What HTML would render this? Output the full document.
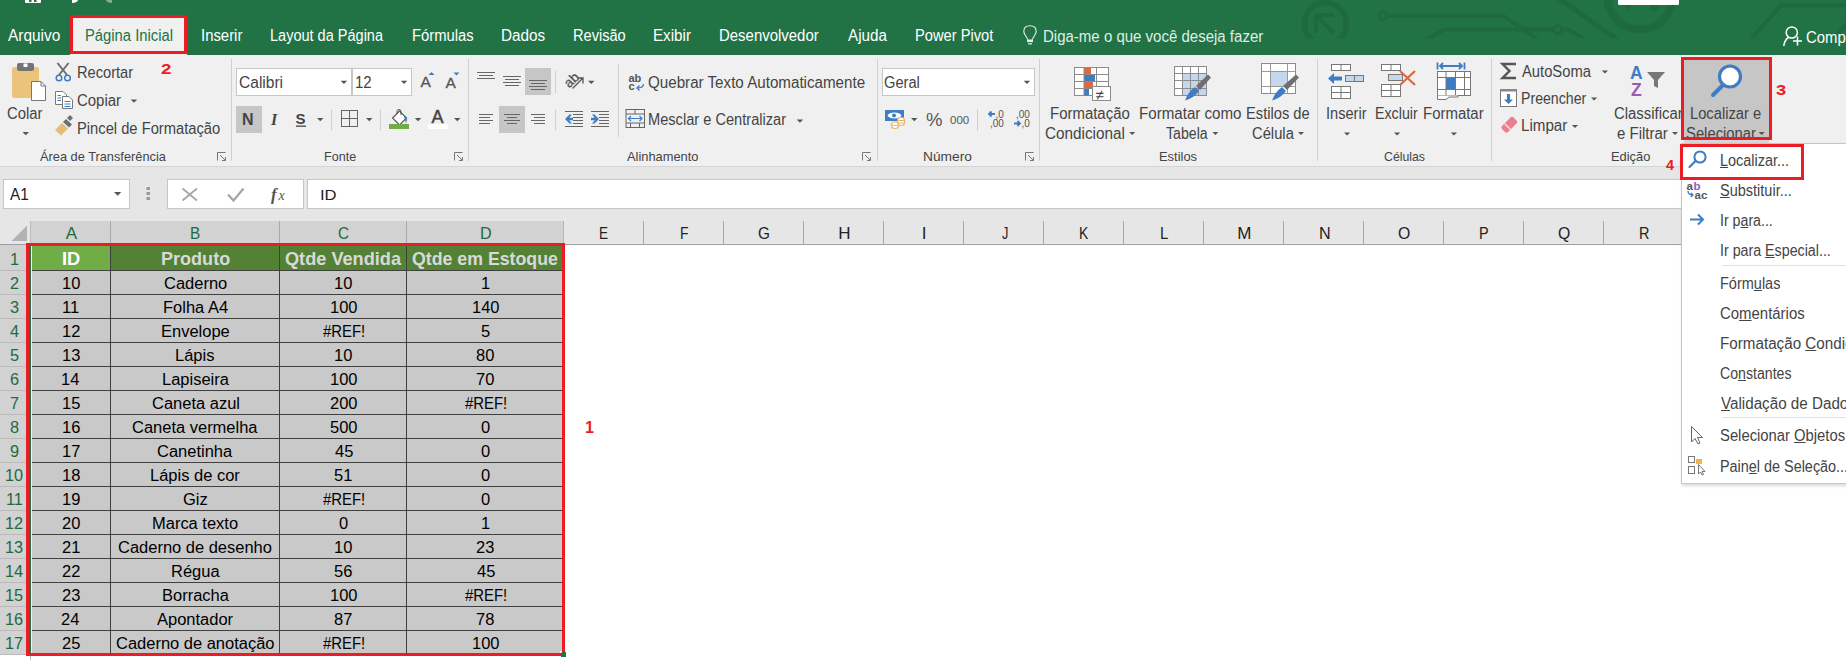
<!DOCTYPE html>
<html><head><meta charset="utf-8">
<style>
html,body{margin:0;padding:0}
body{width:1846px;height:660px;overflow:hidden;position:relative;background:#fff;font-family:"Liberation Sans",sans-serif}
.a{position:absolute}
.t{position:absolute;white-space:pre;line-height:1;transform-origin:0 0;font-family:"Liberation Sans",sans-serif}
.t u{text-decoration:underline;text-underline-offset:1px;text-decoration-thickness:1px}
svg{position:absolute;left:0;top:0}
</style></head><body>
<!-- title bar -->
<div class="a" style="left:0;top:0;width:1846px;height:55px;background:#217346"></div>
<!-- ribbon -->
<div class="a" style="left:0;top:55px;width:1846px;height:111px;background:#f0f0f0"></div>
<div class="a" style="left:0;top:166px;width:1846px;height:1px;background:#d5d5d5"></div>
<!-- formula area -->
<div class="a" style="left:0;top:167px;width:1846px;height:77px;background:#e6e6e6"></div>
<div class="a" style="left:3px;top:179px;width:125px;height:28px;background:#fff;border:1px solid #c6c6c6"></div>
<div class="a" style="left:167px;top:179px;width:135px;height:28px;background:#fff;border:1px solid #c6c6c6"></div>
<div class="a" style="left:307px;top:179px;width:1560px;height:28px;background:#fff;border:1px solid #c6c6c6"></div>
<div class="a" style="left:1684px;top:58px;width:86px;height:81px;background:#c6c6c6"></div>
<div class="a" style="left:1684px;top:139px;width:85px;height:4px;background:#d6d6d6"></div>
<!-- selected tab -->
<div class="a" style="left:70px;top:15px;width:117px;height:40px;background:#f0f0f0"></div>
<!-- sheet -->
<div class="a" style="left:30px;top:221px;width:533px;height:23px;background:#d2d2d2"></div>
<div class="a" style="left:563px;top:243px;width:1283px;height:1px;background:#eaeaea"></div>
<div class="a" style="left:0;top:244px;width:1846px;height:1px;background:#9e9e9e"></div>
<div class="a" style="left:0;top:245px;width:30px;height:409px;background:#d2d2d2"></div>
<div class="a" style="left:30px;top:221px;width:1px;height:439px;background:#bdbdbd"></div>
<svg width="1846" height="660" style="shape-rendering:crispEdges">
 <g fill="#a8a8a8">
  <rect x="110" y="221" width="1" height="23"/><rect x="279" y="221" width="1" height="23"/><rect x="406" y="221" width="1" height="23"/>
  <rect x="563" y="221" width="1" height="23" fill="#b5b5b5"/>
  <rect x="643" y="221" width="1" height="23"/><rect x="723" y="221" width="1" height="23"/><rect x="803" y="221" width="1" height="23"/>
  <rect x="883" y="221" width="1" height="23"/><rect x="963" y="221" width="1" height="23"/><rect x="1043" y="221" width="1" height="23"/>
  <rect x="1123" y="221" width="1" height="23"/><rect x="1203" y="221" width="1" height="23"/><rect x="1283" y="221" width="1" height="23"/>
  <rect x="1363" y="221" width="1" height="23"/><rect x="1443" y="221" width="1" height="23"/><rect x="1523" y="221" width="1" height="23"/>
  <rect x="1603" y="221" width="1" height="23"/>
 </g>
 <g fill="#bababa">
  <rect x="0" y="270" width="30" height="1"/><rect x="0" y="294" width="30" height="1"/><rect x="0" y="318" width="30" height="1"/>
  <rect x="0" y="342" width="30" height="1"/><rect x="0" y="366" width="30" height="1"/><rect x="0" y="390" width="30" height="1"/>
  <rect x="0" y="414" width="30" height="1"/><rect x="0" y="438" width="30" height="1"/><rect x="0" y="462" width="30" height="1"/>
  <rect x="0" y="486" width="30" height="1"/><rect x="0" y="510" width="30" height="1"/><rect x="0" y="534" width="30" height="1"/>
  <rect x="0" y="558" width="30" height="1"/><rect x="0" y="582" width="30" height="1"/><rect x="0" y="606" width="30" height="1"/>
  <rect x="0" y="630" width="30" height="1"/><rect x="0" y="654" width="30" height="1"/>
 </g>
 <polygon points="11.5,241 27,241 27,225.5" fill="#b3b3b3" style="shape-rendering:auto"/>
 <!-- table -->
 <rect x="30" y="244" width="80" height="26" fill="#70ad47"/>
 <rect x="110" y="244" width="453" height="26" fill="#548235"/>
 <rect x="30" y="270" width="533" height="384" fill="#c9c9c9"/>
 <g fill="#404040">
  <rect x="30" y="270" width="533" height="1"/><rect x="30" y="294" width="533" height="1"/><rect x="30" y="318" width="533" height="1"/>
  <rect x="30" y="342" width="533" height="1"/><rect x="30" y="366" width="533" height="1"/><rect x="30" y="390" width="533" height="1"/>
  <rect x="30" y="414" width="533" height="1"/><rect x="30" y="438" width="533" height="1"/><rect x="30" y="462" width="533" height="1"/>
  <rect x="30" y="486" width="533" height="1"/><rect x="30" y="510" width="533" height="1"/><rect x="30" y="534" width="533" height="1"/>
  <rect x="30" y="558" width="533" height="1"/><rect x="30" y="582" width="533" height="1"/><rect x="30" y="606" width="533" height="1"/>
  <rect x="30" y="630" width="533" height="1"/>
  <rect x="110" y="244" width="1" height="410"/><rect x="279" y="244" width="1" height="410"/><rect x="406" y="244" width="1" height="410"/>
 </g>
 <rect x="29" y="244" width="2" height="410" fill="#217346"/>
 <rect x="31" y="246" width="1" height="407" fill="#ffffff"/>
</svg>
<!-- title decorations & QAT -->
<svg width="1846" height="60">
 <defs><clipPath id="tc"><rect x="0" y="0" width="1846" height="38.5"/></clipPath></defs>
 <g clip-path="url(#tc)" stroke="#1e6a3e" fill="none">
  <circle cx="1325.3" cy="23.6" r="21" stroke-width="5.5"/>
  <path d="M1316,33 V15 H1334 M1316.5,15.5 L1334,33" stroke-width="4.2"/>
  <circle cx="1382.8" cy="15.7" r="4" stroke-width="3"/>
  <path d="M1387,15.7 H1503 L1538,40" stroke-width="4"/>
  <path d="M1427,40 L1444,29.6 H1553" stroke-width="4"/>
  <circle cx="1557.7" cy="29.7" r="4" stroke-width="3"/>
  <path d="M1562,29.7 H1569 L1586,40" stroke-width="4"/>
  <path d="M1558,-2 L1618,40" stroke-width="5"/>
  <circle cx="1640" cy="-3" r="32.5" stroke-width="8"/>
  <path d="M1620,-1 L1628.5,11 L1637,-1 Z" fill="#1e6a3e" stroke="none"/>
  <rect x="1650" y="-1" width="9" height="11" fill="#1e6a3e" stroke="none"/>
  <path d="M1750,40 L1781,5.3 H1850" stroke-width="4"/>
  <path d="M1833,40 L1850,20" stroke-width="4"/>
 </g>
 <rect x="1618" y="-3" width="61" height="8" rx="1.5" fill="#fff"/>
 <!-- QAT -->
 <rect x="25" y="-4" width="16" height="7" rx="1" fill="#fff"/>
 <rect x="29" y="-2" width="2.5" height="4" fill="#217346"/><rect x="34" y="-2" width="2.5" height="4" fill="#217346"/>
 <path d="M72,3 Q79,3 78.5,-3 L75,-3 Q75,0 72,0 Z" fill="#fff"/>
 <path d="M112,3 Q105,3 105.5,-3 L109,-3 Q109,0 112,0 Z" fill="#7fae92"/>
 <!-- bulb -->
 <path d="M1027.8,39.5 L1025.5,35.5 Q1023.8,33 1023.8,31.5 Q1023.8,25.8 1030,25.8 Q1036.2,25.8 1036.2,31.5 Q1036.2,33 1034.5,35.5 L1032.2,39.5" fill="none" stroke="#e4efe8" stroke-width="1.1"/>
 <rect x="1027" y="39.5" width="6" height="2.6" fill="#e4efe8"/>
 <rect x="1028" y="43.2" width="4" height="1.2" fill="#e4efe8"/>
 <!-- person -->
 <g stroke="#fff" stroke-width="1.5" fill="none">
  <circle cx="1791.8" cy="32.5" r="5.6"/>
  <path d="M1783.8,46 Q1784.5,40 1788.5,37.5"/>
  <path d="M1793,41 H1802 M1797.5,36.5 V45.5"/>
 </g>
</svg>
<!-- ribbon icons -->
<svg width="1846" height="170">
 <!-- font boxes -->
 <rect x="236.5" y="68.5" width="115" height="27" fill="#fff" stroke="#c6c6c6"/>
 <rect x="352.5" y="68.5" width="59" height="27" fill="#fff" stroke="#c6c6c6"/>
 <rect x="882.5" y="68.5" width="152" height="27" fill="#fff" stroke="#c6c6c6"/>
 <!-- paste -->
 <rect x="12" y="67" width="27" height="31" rx="2" fill="#eac47a"/>
 <rect x="17" y="63" width="17" height="8" rx="2" fill="#737373"/>
 <rect x="23.5" y="63.5" width="4" height="3.5" fill="#fff"/>
 <path d="M31.5,81.5 H41 L45.5,86 V100.5 H31.5 Z" fill="#fff" stroke="#777" stroke-width="1"/>
 <path d="M41,81.5 V86 H45.5" fill="none" stroke="#777" stroke-width="1"/>
 <!-- scissors -->
 <g stroke="#6e6e6e" stroke-width="2" fill="none">
  <path d="M57.5,63 L67,75 M68.5,63 L59,75"/>
 </g>
 <g stroke="#3e7cc3" stroke-width="1.5" fill="none">
  <circle cx="59" cy="78" r="2.8"/><circle cx="67.5" cy="78" r="2.8"/>
 </g>
 <!-- copy -->
 <g fill="#fff" stroke="#777" stroke-width="1">
  <path d="M55.5,91.5 H63 L66.5,95 V104.5 H55.5 Z"/>
  <path d="M62.5,96.5 H69 L72.5,100 V108.5 H62.5 Z"/>
 </g>
 <g stroke="#3e7cc3" stroke-width="1"><path d="M64.5,101.5 H70.5 M64.5,104 H70.5 M64.5,106.5 H70.5 M57.5,95.5 H61 M57.5,98 H61 M57.5,100.5 H61"/></g>
 <!-- brush -->
 <path d="M55,130 L62,123 L68,128.5 L61,135.5 Z" fill="#e5bd73"/>
 <path d="M63,122 L66,119 L72,124.5 L69,127.5 Z" fill="#6e6e6e"/>
 <path d="M67,118 L70,115 L73,118 L70,121 Z" fill="#6e6e6e"/>
 <!-- dropdown arrows -->
 <g fill="#555">
  <path d="M22.5,132 h6.5 l-3.25,3.2 z"/>
  <path d="M130.7,99.5 h6.5 l-3.25,3.2 z"/>
  <path d="M340.7,80.8 h6.5 l-3.25,3.2 z"/>
  <path d="M400.8,80.8 h6.5 l-3.25,3.2 z"/>
  <path d="M317,118 h6.5 l-3.25,3.2 z"/>
  <path d="M366,118 h6.5 l-3.25,3.2 z"/>
  <path d="M414.8,118 h6.5 l-3.25,3.2 z"/>
  <path d="M454,118 h6.5 l-3.25,3.2 z"/>
  <path d="M588,80.8 h6.5 l-3.25,3.2 z"/>
  <path d="M796.7,119.5 h6.5 l-3.25,3.2 z"/>
  <path d="M1023.7,80.8 h6.5 l-3.25,3.2 z"/>
  <path d="M911,118 h6.5 l-3.25,3.2 z"/>
  <path d="M1129.2,132 h6 l-3,3 z"/>
  <path d="M1212.4,132 h6 l-3,3 z"/>
  <path d="M1298,132 h6 l-3,3 z"/>
  <path d="M1344,132.5 h6.2 l-3.1,3 z"/>
  <path d="M1394,132.5 h6.2 l-3.1,3 z"/>
  <path d="M1450.8,132.5 h6.2 l-3.1,3 z"/>
  <path d="M1601.8,70.5 h6.2 l-3.1,3 z"/>
  <path d="M1591,97.5 h6.2 l-3.1,3 z"/>
  <path d="M1571.9,125 h6.2 l-3.1,3 z"/>
  <path d="M1672,132 h6 l-3,3 z"/>
  <path d="M1758.6,132 h6.2 l-3.1,3 z"/>
 </g>
 <!-- separators -->
 <g fill="#d0d0d0">
  <rect x="231" y="59" width="1" height="102"/>
  <rect x="468" y="59" width="1" height="102"/>
  <rect x="877" y="59" width="1" height="102"/>
  <rect x="1039" y="59" width="1" height="102"/>
  <rect x="1317" y="59" width="1" height="102"/>
  <rect x="1491" y="59" width="1" height="102"/>
  <rect x="618" y="64" width="1" height="73"/>
  <rect x="331" y="109" width="1" height="22"/>
  <rect x="380" y="109" width="1" height="22"/>
  <rect x="555" y="71" width="1" height="22"/>
  <rect x="555" y="109" width="1" height="22"/>
  <rect x="977" y="109" width="1" height="22"/>
 </g>
 <!-- dialog launchers -->
 <g stroke="#777" stroke-width="1" fill="none">
  <path d="M217.5,160.5 V152.5 H225.5"/><path d="M220,155 L225.5,160.5 M222,160.5 H225.5 V157"/>
  <path d="M454.5,160.5 V152.5 H462.5"/><path d="M457,155 L462.5,160.5 M459,160.5 H462.5 V157"/>
  <path d="M862.5,160.5 V152.5 H870.5"/><path d="M865,155 L870.5,160.5 M867,160.5 H870.5 V157"/>
  <path d="M1025.5,160.5 V152.5 H1033.5"/><path d="M1028,155 L1033.5,160.5 M1030,160.5 H1033.5 V157"/>
 </g>
 <!-- grow/shrink font -->
 <text x="420.5" y="87" font-family="Liberation Sans" font-size="15.5" fill="#555" stroke="#555" stroke-width="0.3">A</text>
 <path d="M428.5,75 l3,-3 l3,3 z" fill="#3e7cc3"/>
 <text x="445.5" y="87.5" font-family="Liberation Sans" font-size="15.5" fill="#555" stroke="#555" stroke-width="0.3">A</text>
 <path d="M453.5,72.5 h6 l-3,3 z" fill="#3e7cc3"/>
 <!-- B I U -->
 <rect x="236" y="106" width="26" height="27" fill="#c6c6c6"/>
 <text x="242" y="125" font-family="Liberation Sans" font-weight="bold" font-size="16" fill="#444">N</text>
 <text x="271" y="125" font-family="Liberation Serif" font-style="italic" font-weight="bold" font-size="16" fill="#444">I</text>
 <text x="295.5" y="124" font-family="Liberation Sans" font-weight="bold" font-size="15" fill="#444">S</text>
 <rect x="296" y="125.5" width="10" height="1.3" fill="#444"/>
 <!-- borders -->
 <g fill="none" stroke="#666" stroke-width="1"><rect x="341.5" y="110.5" width="16" height="16"/><path d="M349.5,110.5 V126.5 M341.5,118.5 H357.5"/></g>
 <!-- fill color -->
 <path d="M392.5,118 L399.5,111 L406.5,118 L399.5,125 Z" fill="#fff" stroke="#555" stroke-width="1.1"/>
 <path d="M397,114 V111.5 Q397,109.5 399,109.5 Q401,109.5 401,111.5 V115" fill="none" stroke="#555" stroke-width="1"/>
 <path d="M403.5,115 Q409,116 406,123.5 Q405,119 403.5,115 Z" fill="#3e7cc3"/>
 <rect x="389" y="124" width="20" height="5" fill="#70ad47"/>
 <!-- font color -->
 <text x="431.5" y="123" font-family="Liberation Sans" font-size="18" fill="#444" stroke="#444" stroke-width="0.5">A</text>
 <rect x="428" y="124.5" width="20" height="4.5" fill="#fff"/>
 <!-- align icons -->
 <rect x="525" y="68" width="26" height="27" fill="#c6c6c6"/>
 <rect x="499" y="106" width="26" height="27" fill="#c6c6c6"/>
 <g fill="#666"><rect x="477" y="72" width="18" height="1"/><rect x="479" y="75" width="14" height="1"/><rect x="477" y="78" width="18" height="1"/><rect x="503" y="76" width="18" height="1"/><rect x="505" y="79" width="14" height="1"/><rect x="503" y="82" width="18" height="1"/><rect x="505" y="85" width="14" height="1"/><rect x="529" y="80" width="18" height="1"/><rect x="531" y="83" width="14" height="1"/><rect x="529" y="86" width="18" height="1"/><rect x="531" y="89" width="14" height="1"/><rect x="479" y="114" width="14" height="1"/><rect x="479" y="117" width="11" height="1"/><rect x="479" y="120" width="14" height="1"/><rect x="479" y="123" width="11" height="1"/><rect x="504" y="114" width="16" height="1"/><rect x="507" y="117" width="10" height="1"/><rect x="504" y="120" width="16" height="1"/><rect x="507" y="123" width="10" height="1"/><rect x="531" y="114" width="14" height="1"/><rect x="534" y="117" width="11" height="1"/><rect x="531" y="120" width="14" height="1"/><rect x="534" y="123" width="11" height="1"/></g>
 <!-- orientation -->
 <text x="571.5" y="84.5" text-anchor="middle" font-family="Liberation Sans" font-size="13.5" fill="#555" stroke="#555" stroke-width="0.3" transform="rotate(-45 571.5 80)">ab</text>
 <path d="M572.5,88.5 L582.5,78.5 M577.5,78 H583 V83.5" stroke="#555" stroke-width="1.3" fill="none"/>
 <!-- indent -->
 <g fill="#666"><rect x="565" y="111" width="18" height="1"/><rect x="573" y="114" width="10" height="1"/><rect x="573" y="117" width="10" height="1"/><rect x="573" y="120" width="10" height="1"/><rect x="573" y="123" width="10" height="1"/><rect x="565" y="126" width="18" height="1"/><rect x="591" y="111" width="18" height="1"/><rect x="599" y="114" width="10" height="1"/><rect x="599" y="117" width="10" height="1"/><rect x="599" y="120" width="10" height="1"/><rect x="599" y="123" width="10" height="1"/><rect x="591" y="126" width="18" height="1"/></g>
 <path d="M565,119 L569.5,114.5 H572 L569.2,117.8 H573 V120.2 H569.2 L572,123.5 H569.5 Z" fill="#3e7cc3"/>
 <path d="M599,119 L594.5,114.5 H592 L594.8,117.8 H591 V120.2 H594.8 L592,123.5 H594.5 Z" fill="#3e7cc3"/>
 <!-- wrap text -->
 <text x="628.5" y="82" font-family="Liberation Sans" font-weight="bold" font-size="11" fill="#555">ab</text>
 <text x="628.5" y="90" font-family="Liberation Sans" font-weight="bold" font-size="11" fill="#555">c</text>
 <path d="M643.5,84 Q643.5,88 637,88 M639.5,85.5 L637,88 L639.5,90.5" stroke="#3e7cc3" stroke-width="1.3" fill="none"/>
 <!-- merge -->
 <g fill="none" stroke="#666" stroke-width="1"><rect x="626" y="109.5" width="18.5" height="18"/><path d="M626,114 H644.5 M626,123 H644.5 M635,109.5 V114 M630.5,123 V127.5 M639.5,123 V127.5"/></g>
 <path d="M628.5,118.5 H642 M631,116 L628.5,118.5 L631,121 M639.5,116 L642,118.5 L639.5,121" stroke="#3e7cc3" stroke-width="1.2" fill="none"/>
 <!-- currency -->
 <rect x="885" y="110" width="19" height="11" fill="#3e7cc3"/>
 <path d="M887.5,115.5 Q889,112.5 894.5,112.5 Q900,112.5 901.5,115.5 Q900,118.5 894.5,118.5 Q889,118.5 887.5,115.5 Z" fill="#fff"/>
 <circle cx="894" cy="115.5" r="2" fill="#3e7cc3"/>
 <g fill="#fff" stroke="#e5b76a" stroke-width="1.1">
  <rect x="897.5" y="117.5" width="7" height="8" rx="3"/>
  <rect x="891.5" y="122" width="7" height="6.5" rx="3"/>
 </g>
 <path d="M897.5,120.5 H904.5 M897.5,123 H904.5 M891.5,125.3 H898.5" stroke="#e5b76a" stroke-width="1"/>
 <text x="926" y="126" font-family="Liberation Sans" font-size="18.5" fill="#555">%</text>
 <text x="950" y="123.5" font-family="Liberation Sans" font-size="11.5" fill="#555">000</text>
 <!-- decimals -->
 <text x="995.5" y="117.5" font-family="Liberation Sans" font-size="10" fill="#555">,0</text>
 <text x="990" y="127" font-family="Liberation Sans" font-size="10" fill="#555">,00</text>
 <path d="M989,114 H995 M991.5,111.5 L989,114 L991.5,116.5" stroke="#3e7cc3" stroke-width="1.8" fill="none"/>
 <text x="1016" y="117.5" font-family="Liberation Sans" font-size="10" fill="#555">,00</text>
 <text x="1021.5" y="127" font-family="Liberation Sans" font-size="10" fill="#555">,0</text>
 <path d="M1014,123.5 H1020 M1017.5,121 L1020,123.5 L1017.5,126" stroke="#3e7cc3" stroke-width="1.8" fill="none"/>
</svg>
<svg width="1846" height="520">
 <!-- conditional formatting -->
 <g>
  <rect x="1074.5" y="67.5" width="34" height="28" fill="#fff" stroke="#8c8c8c"/>
  <rect x="1084" y="68" width="7" height="6.5" fill="#e0663c"/>
  <rect x="1084" y="75" width="11" height="6.5" fill="#3e7cc3"/>
  <rect x="1084" y="82" width="9" height="6.5" fill="#e0663c"/>
  <rect x="1084" y="89" width="5" height="6.5" fill="#3e7cc3"/>
  <path d="M1084,67.5 V95.5 M1096.5,67.5 V95.5 M1074.5,74.5 H1108.5 M1074.5,81.5 H1108.5 M1074.5,88.5 H1108.5" stroke="#8c8c8c" stroke-width="1" fill="none"/>
  <rect x="1092.5" y="86.5" width="18" height="14" fill="#fff" stroke="#8c8c8c"/>
  <text x="1095.5" y="99.5" font-family="Liberation Sans" font-size="15" fill="#444">≠</text>
 </g>
 <!-- format as table -->
 <g>
  <rect x="1174.5" y="66.5" width="32" height="29" fill="#fff" stroke="#8c8c8c"/>
  <rect x="1182.5" y="73.5" width="24" height="22" fill="#c5d7ec"/>
  <path d="M1182.5,66.5 V95.5 M1190.5,66.5 V95.5 M1198.5,66.5 V95.5 M1174.5,73.5 H1206.5 M1174.5,80.5 H1206.5 M1174.5,88.5 H1206.5" stroke="#8c8c8c" fill="none"/>
  <rect x="1174.5" y="66.5" width="32" height="29" fill="none" stroke="#8c8c8c"/>
  <path d="M1196,86 L1208,74.5 L1211,77.5 L1200,90 Z" fill="#6f6f6f"/>
  <path d="M1185,100.5 Q1188,92 1195,87 L1199,91 Q1194,98 1185,100.5 Z" fill="#3e7cc3"/>
 </g>
 <!-- cell styles -->
 <g>
  <rect x="1261.5" y="63.5" width="34" height="30" fill="#fff" stroke="#8c8c8c"/>
  <rect x="1270" y="71" width="17" height="15" fill="#c5d7ec"/>
  <path d="M1270.5,63.5 V93.5 M1287.5,63.5 V93.5 M1261.5,71.5 H1295.5 M1261.5,86.5 H1295.5" stroke="#9a9a9a" fill="none"/>
  <path d="M1283,86 L1296,74.5 L1299,77.5 L1287,90 Z" fill="#6f6f6f"/>
  <path d="M1272,100.5 Q1275,92 1282,87 L1286,91 Q1281,98 1272,100.5 Z" fill="#3e7cc3"/>
 </g>
 <!-- insert cells -->
 <g fill="#fff" stroke="#777" stroke-width="1">
  <rect x="1331.5" y="64.5" width="19" height="6"/><path d="M1341,64.5 V70.5"/>
  <rect x="1331.5" y="86.5" width="19" height="12"/><path d="M1341,86.5 V98.5 M1331.5,92.5 H1350.5"/>
 </g>
 <rect x="1345.5" y="75.5" width="18" height="6" fill="#c5d7ec" stroke="#777"/><path d="M1354.5,75.5 V81.5" stroke="#777"/>
 <path d="M1328,78.5 L1334,73 V76.5 H1342 V80.5 H1334 V84 Z" fill="#3e7cc3"/>
 <!-- delete cells -->
 <g fill="#fff" stroke="#777" stroke-width="1">
  <rect x="1381.5" y="64.5" width="19" height="6"/><path d="M1391,64.5 V70.5"/>
  <rect x="1381.5" y="84.5" width="19" height="12"/><path d="M1391,84.5 V96.5 M1381.5,90.5 H1400.5"/>
 </g>
 <rect x="1388.5" y="74.5" width="14" height="6" fill="#c5d7ec" stroke="#777"/>
 <path d="M1400,71 L1415,85 M1415,71 L1400,85" stroke="#e0663c" stroke-width="2.2"/>
 <!-- format cells -->
 <path d="M1437.5,62.5 V69.5 M1464.5,62.5 V69.5 M1439.5,66 H1462.5 M1443,63 L1440,66 L1443,69 M1459,63 L1462,66 L1459,69" stroke="#3e7cc3" stroke-width="1.8" fill="none"/>
 <rect x="1437.5" y="71.5" width="33" height="24" fill="#fff" stroke="#777"/>
 <rect x="1446" y="78" width="9" height="11" fill="#3e7cc3"/>
 <path d="M1446,71.5 V95.5 M1455.5,71.5 V95.5 M1464.5,71.5 V95.5 M1437.5,77.5 H1470.5 M1437.5,89.5 H1470.5" stroke="#777" fill="none"/>
 <path d="M1437.5,95.5 V99.5 H1446 L1449,97 H1458 V95.5" fill="#fff" stroke="#777"/>
 <!-- sigma -->
 <path d="M1516,64 H1502.5 L1509.5,71 L1502.5,78 H1516" fill="none" stroke="#555" stroke-width="2.4"/>
 <!-- fill -->
 <rect x="1500.5" y="89.5" width="16" height="17" fill="#fff" stroke="#777"/>
 <rect x="1500" y="89" width="17" height="2.5" fill="#888"/>
 <path d="M1507,94 H1510 V99.5 H1513 L1508.5,104 L1504,99.5 H1507 Z" fill="#3e7cc3"/>
 <!-- eraser -->
 <path d="M1502,126 L1510.5,117.5 Q1512,116 1513.5,117.5 L1516.5,120.5 Q1518,122 1516.5,123.5 L1508,132 Q1506.5,133.5 1505,132 L1502,129 Q1500.5,127.5 1502,126 Z" fill="#e8808f"/>
 <path d="M1504.5,123.5 L1510.5,129.5" stroke="#fbe3e7" stroke-width="1.2"/>
 <!-- sort filter -->
 <text x="1630" y="78.5" font-family="Liberation Sans" font-weight="bold" font-size="17.5" fill="#3e7cc3">A</text>
 <text x="1631" y="96" font-family="Liberation Sans" font-weight="bold" font-size="17.5" fill="#9b59b6">Z</text>
 <path d="M1647,72 H1665 L1658,80 V88 L1654,86 V80 Z" fill="#777"/>
</svg>
<svg width="1846" height="520">
 <!-- magnifier big -->
 <circle cx="1730" cy="76.5" r="10.5" fill="#fff" stroke="#3e7cc3" stroke-width="3.2"/>
 <path d="M1713,95 L1722,86" stroke="#3e7cc3" stroke-width="4" stroke-linecap="round"/>
 <!-- formula bar -->
 <path d="M114,192 h7.3 l-3.65,3.8 z" fill="#555"/>
 <g fill="#9a9a9a"><rect x="146.5" y="187" width="3.5" height="3"/><rect x="146.5" y="192" width="3.5" height="3"/><rect x="146.5" y="197" width="3.5" height="3"/></g>
 <path d="M182.5,188.5 L197,200.5 M197,188.5 L182.5,200.5" stroke="#a6a6a6" stroke-width="1.8"/>
 <path d="M228,194.5 L233.5,200.5 L243.5,188.5" stroke="#a6a6a6" stroke-width="2.2" fill="none"/>
 <text x="271" y="200" font-family="Liberation Serif" font-style="italic" font-weight="bold" font-size="17" fill="#555">f</text>
 <text x="278.5" y="200" font-family="Liberation Serif" font-style="italic" font-size="14" fill="#555">x</text>
</svg>
<!-- dropdown menu -->
<div class="a" style="left:1681px;top:143px;width:200px;height:339px;background:#fff;border:1px solid #c6c6c6;box-shadow:1px 2px 3px rgba(0,0,0,0.15)"></div>
<div class="a" style="left:1722px;top:265px;width:130px;height:1px;background:#e1e1e1"></div>
<div class="a" style="left:1722px;top:417px;width:130px;height:1px;background:#e1e1e1"></div>
<svg width="1846" height="520">
 <circle cx="1700" cy="157" r="5.6" fill="none" stroke="#3e7cc3" stroke-width="2"/>
 <path d="M1689.5,167 L1695.5,161" stroke="#3e7cc3" stroke-width="2.2" stroke-linecap="round"/>
 <text x="1686.5" y="190" font-family="Liberation Sans" font-weight="bold" font-size="11.5" fill="#555">a</text>
 <text x="1693.5" y="190" font-family="Liberation Sans" font-weight="bold" font-size="11.5" fill="#9b59b6">b</text>
 <text x="1694.5" y="198.5" font-family="Liberation Sans" font-weight="bold" font-size="11.5" fill="#505a66">ac</text>
 <path d="M1688,191 Q1688,195 1693,195 M1690.8,193 L1693,195 L1690.8,197" stroke="#3e7cc3" stroke-width="1.3" fill="none"/>
 <path d="M1690,219.5 H1703 M1698,214.5 L1703,219.5 L1698,224.5" stroke="#3e7cc3" stroke-width="2" fill="none"/>
 <path d="M1691.5,426.5 V442 L1695,438.5 L1698,444 L1700,443 L1697.5,437.5 L1702.5,437.5 Z" fill="#fff" stroke="#666" stroke-width="1"/>
 <g fill="none" stroke="#777" stroke-width="1"><rect x="1688.5" y="456.5" width="6" height="6"/><rect x="1688.5" y="466.5" width="6" height="7"/></g>
 <rect x="1696" y="459" width="6" height="5" fill="#f0b44c"/>
 <path d="M1698.5,464.5 V474 L1700.5,472 L1702,475 L1703.5,474.5 L1702,471.5 L1705,471.5 Z" fill="#fff" stroke="#666" stroke-width="0.9"/>
</svg>

<div class="t" style="left:8.00px;top:28.00px;font-size:16px;color:#ffffff;transform:scaleX(0.9630);">Arquivo</div>
<div class="t" style="left:85.08px;top:28.00px;font-size:16px;color:#217346;transform:scaleX(0.9247);">Página Inicial</div>
<div class="t" style="left:201.07px;top:28.00px;font-size:16px;color:#ffffff;transform:scaleX(0.9302);">Inserir</div>
<div class="t" style="left:270.09px;top:28.00px;font-size:16px;color:#ffffff;transform:scaleX(0.9073);">Layout da Página</div>
<div class="t" style="left:412.08px;top:28.00px;font-size:16px;color:#ffffff;transform:scaleX(0.9231);">Fórmulas</div>
<div class="t" style="left:501.04px;top:28.00px;font-size:16px;color:#ffffff;transform:scaleX(0.9556);">Dados</div>
<div class="t" style="left:573.09px;top:28.00px;font-size:16px;color:#ffffff;transform:scaleX(0.9107);">Revisão</div>
<div class="t" style="left:653.05px;top:28.00px;font-size:16px;color:#ffffff;transform:scaleX(0.9487);">Exibir</div>
<div class="t" style="left:719.07px;top:28.00px;font-size:16px;color:#ffffff;transform:scaleX(0.9340);">Desenvolvedor</div>
<div class="t" style="left:848.00px;top:28.00px;font-size:16px;color:#ffffff;transform:scaleX(0.9512);">Ajuda</div>
<div class="t" style="left:915.08px;top:28.00px;font-size:16px;color:#ffffff;transform:scaleX(0.9167);">Power Pivot</div>
<div class="t" style="left:1042.56px;top:29.00px;font-size:16px;color:#dfeee5;transform:scaleX(0.9380);">Diga-me o que você deseja fazer</div>
<div class="t" style="left:1805.67px;top:30.00px;font-size:16px;color:#ffffff;transform:scaleX(0.9300);">Compartilhar</div>
<div class="t" style="left:7.47px;top:106.00px;font-size:16px;color:#444444;transform:scaleX(0.9270);">Colar</div>
<div class="t" style="left:76.98px;top:65.00px;font-size:16px;color:#444444;transform:scaleX(0.9150);">Recortar</div>
<div class="t" style="left:76.67px;top:93.00px;font-size:16px;color:#444444;transform:scaleX(0.9348);">Copiar</div>
<div class="t" style="left:76.68px;top:121.00px;font-size:16px;color:#444444;transform:scaleX(0.9201);">Pincel de Formatação</div>
<div class="t" style="left:40.40px;top:150.00px;font-size:13.2px;color:#444444;transform:scaleX(0.9700);">Área de Transferência</div>
<div class="t" style="left:238.63px;top:75.00px;font-size:16px;color:#444444;transform:scaleX(0.9721);">Calibri</div>
<div class="t" style="left:354.97px;top:75.00px;font-size:16px;color:#444444;transform:scaleX(0.9313);">12</div>
<div class="t" style="left:323.85px;top:150.00px;font-size:13.2px;color:#444444;transform:scaleX(0.9531);">Fonte</div>
<div class="t" style="left:648.45px;top:75.00px;font-size:16px;color:#444444;transform:scaleX(0.9474);">Quebrar Texto Automaticamente</div>
<div class="t" style="left:648.49px;top:112.00px;font-size:16px;color:#444444;transform:scaleX(0.9133);">Mesclar e Centralizar</div>
<div class="t" style="left:627.00px;top:150.00px;font-size:13.2px;color:#444444;transform:scaleX(0.9753);">Alinhamento</div>
<div class="t" style="left:884.38px;top:75.00px;font-size:16px;color:#444444;transform:scaleX(0.9162);">Geral</div>
<div class="t" style="left:923.36px;top:150.00px;font-size:13.2px;color:#444444;transform:scaleX(1.0444);">Número</div>
<div class="t" style="left:1050.37px;top:106.00px;font-size:16px;color:#444444;transform:scaleX(0.9345);">Formatação</div>
<div class="t" style="left:1045.14px;top:126.00px;font-size:16px;color:#444444;transform:scaleX(0.9561);">Condicional</div>
<div class="t" style="left:1139.26px;top:106.00px;font-size:16px;color:#444444;transform:scaleX(0.9449);">Formatar como</div>
<div class="t" style="left:1165.80px;top:126.00px;font-size:16px;color:#444444;transform:scaleX(0.8830);">Tabela</div>
<div class="t" style="left:1246.48px;top:106.00px;font-size:16px;color:#444444;transform:scaleX(0.9176);">Estilos de</div>
<div class="t" style="left:1252.08px;top:126.00px;font-size:16px;color:#444444;transform:scaleX(0.9227);">Célula</div>
<div class="t" style="left:1159.32px;top:150.00px;font-size:13.2px;color:#444444;transform:scaleX(0.9784);">Estilos</div>
<div class="t" style="left:1326.49px;top:106.00px;font-size:16px;color:#444444;transform:scaleX(0.9116);">Inserir</div>
<div class="t" style="left:1375.01px;top:106.00px;font-size:16px;color:#444444;transform:scaleX(0.8894);">Excluir</div>
<div class="t" style="left:1423.27px;top:106.00px;font-size:16px;color:#444444;transform:scaleX(0.9344);">Formatar</div>
<div class="t" style="left:1383.67px;top:150.00px;font-size:13.2px;color:#444444;transform:scaleX(0.9326);">Células</div>
<div class="t" style="left:1522.20px;top:64.00px;font-size:16px;color:#444444;transform:scaleX(0.9227);">AutoSoma</div>
<div class="t" style="left:1521.32px;top:91.00px;font-size:16px;color:#444444;transform:scaleX(0.8836);">Preencher</div>
<div class="t" style="left:1521.05px;top:118.00px;font-size:16px;color:#444444;transform:scaleX(0.9479);">Limpar</div>
<div class="t" style="left:1614.07px;top:106.00px;font-size:16px;color:#444444;transform:scaleX(0.9315);">Classificar</div>
<div class="t" style="left:1617.06px;top:126.00px;font-size:16px;color:#444444;transform:scaleX(0.9377);">e Filtrar</div>
<div class="t" style="left:1611.33px;top:150.00px;font-size:13.2px;color:#444444;transform:scaleX(0.9744);">Edição</div>
<div class="t" style="left:1689.88px;top:106.00px;font-size:16px;color:#444444;transform:scaleX(0.9197);">Localizar e</div>
<div class="t" style="left:1685.57px;top:126.00px;font-size:16px;color:#444444;transform:scaleX(0.9257);">Selecionar</div>
<div class="t" style="left:10.10px;top:187.00px;font-size:16px;color:#222;transform:scaleX(0.9579);">A1</div>
<div class="t" style="left:320.33px;top:187.00px;font-size:15.5px;color:#222;transform:scaleX(1.0714);">ID</div>
<div class="t" style="left:1720.10px;top:153.00px;font-size:16px;color:#444444;transform:scaleX(0.9014);"><u>L</u>ocalizar...</div>
<div class="t" style="left:1720.09px;top:183.00px;font-size:16px;color:#444444;transform:scaleX(0.9065);"><u>S</u>ubstituir...</div>
<div class="t" style="left:1720.11px;top:213.00px;font-size:16px;color:#444444;transform:scaleX(0.8860);">Ir p<u>a</u>ra...</div>
<div class="t" style="left:1720.11px;top:243.00px;font-size:16px;color:#444444;transform:scaleX(0.8902);">Ir para <u>E</u>special...</div>
<div class="t" style="left:1719.99px;top:276.00px;font-size:16px;color:#444444;transform:scaleX(0.9062);">Fórm<u>u</u>las</div>
<div class="t" style="left:1720.07px;top:306.00px;font-size:16px;color:#444444;transform:scaleX(0.9337);">Co<u>m</u>entários</div>
<div class="t" style="left:1720.05px;top:336.00px;font-size:16px;color:#444444;transform:scaleX(0.9500);">Formatação <u>C</u>ondicional</div>
<div class="t" style="left:1720.12px;top:366.00px;font-size:16px;color:#444444;transform:scaleX(0.8838);">Co<u>n</u>stantes</div>
<div class="t" style="left:1721.00px;top:396.00px;font-size:16px;color:#444444;transform:scaleX(0.9500);"><u>V</u>alidação de Dados</div>
<div class="t" style="left:1720.07px;top:428.00px;font-size:16px;color:#444444;transform:scaleX(0.9254);">Selecionar <u>O</u>bjetos</div>
<div class="t" style="left:1720.10px;top:459.00px;font-size:16px;color:#444444;transform:scaleX(0.9000);">Pain<u>e</u>l de Seleção...</div>
<div class="t" style="left:65.70px;top:225.00px;font-size:17px;color:#1d6b3f;">A</div>
<div class="t" style="left:190.30px;top:225.00px;font-size:17px;color:#1d6b3f;transform:scaleX(0.9000);">B</div>
<div class="t" style="left:338.30px;top:225.00px;font-size:17px;color:#1d6b3f;transform:scaleX(0.9000);">C</div>
<div class="t" style="left:479.52px;top:225.00px;font-size:17px;color:#1d6b3f;transform:scaleX(0.9500);">D</div>
<div class="t" style="left:599.40px;top:225.00px;font-size:17px;color:#222;transform:scaleX(0.8000);">E</div>
<div class="t" style="left:679.69px;top:225.00px;font-size:17px;color:#222;transform:scaleX(0.8200);">F</div>
<div class="t" style="left:758.35px;top:225.00px;font-size:17px;color:#222;transform:scaleX(0.9000);">G</div>
<div class="t" style="left:838.20px;top:225.00px;font-size:17px;color:#222;">H</div>
<div class="t" style="left:921.70px;top:225.00px;font-size:17px;color:#222;">I</div>
<div class="t" style="left:1001.58px;top:225.00px;font-size:17px;color:#222;transform:scaleX(0.7500);">J</div>
<div class="t" style="left:1079.28px;top:225.00px;font-size:17px;color:#222;transform:scaleX(0.8200);">K</div>
<div class="t" style="left:1159.80px;top:225.00px;font-size:17px;color:#222;transform:scaleX(0.8800);">L</div>
<div class="t" style="left:1237.20px;top:225.00px;font-size:17px;color:#222;">M</div>
<div class="t" style="left:1318.50px;top:225.00px;font-size:17px;color:#222;transform:scaleX(0.9500);">N</div>
<div class="t" style="left:1398.15px;top:225.00px;font-size:17px;color:#222;transform:scaleX(0.9300);">O</div>
<div class="t" style="left:1479.10px;top:225.00px;font-size:17px;color:#222;transform:scaleX(0.8500);">P</div>
<div class="t" style="left:1558.15px;top:225.00px;font-size:17px;color:#222;transform:scaleX(0.9300);">Q</div>
<div class="t" style="left:1639.10px;top:225.00px;font-size:17px;color:#222;transform:scaleX(0.8500);">R</div>
<div class="t" style="left:9.80px;top:251.00px;font-size:17px;color:#1d6b3f;transform:scaleX(0.9600);">1</div>
<div class="t" style="left:9.80px;top:275.00px;font-size:17px;color:#1d6b3f;transform:scaleX(0.9600);">2</div>
<div class="t" style="left:9.80px;top:299.00px;font-size:17px;color:#1d6b3f;transform:scaleX(0.9600);">3</div>
<div class="t" style="left:10.28px;top:323.00px;font-size:17px;color:#1d6b3f;transform:scaleX(0.9600);">4</div>
<div class="t" style="left:9.80px;top:347.00px;font-size:17px;color:#1d6b3f;transform:scaleX(0.9600);">5</div>
<div class="t" style="left:9.80px;top:371.00px;font-size:17px;color:#1d6b3f;transform:scaleX(0.9600);">6</div>
<div class="t" style="left:9.80px;top:395.00px;font-size:17px;color:#1d6b3f;transform:scaleX(0.9600);">7</div>
<div class="t" style="left:9.80px;top:419.00px;font-size:17px;color:#1d6b3f;transform:scaleX(0.9600);">8</div>
<div class="t" style="left:9.80px;top:443.00px;font-size:17px;color:#1d6b3f;transform:scaleX(0.9600);">9</div>
<div class="t" style="left:5.48px;top:467.00px;font-size:17px;color:#1d6b3f;transform:scaleX(0.9600);">10</div>
<div class="t" style="left:5.96px;top:491.00px;font-size:17px;color:#1d6b3f;transform:scaleX(0.9600);">11</div>
<div class="t" style="left:5.48px;top:515.00px;font-size:17px;color:#1d6b3f;transform:scaleX(0.9600);">12</div>
<div class="t" style="left:5.48px;top:539.00px;font-size:17px;color:#1d6b3f;transform:scaleX(0.9600);">13</div>
<div class="t" style="left:5.00px;top:563.00px;font-size:17px;color:#1d6b3f;transform:scaleX(0.9600);">14</div>
<div class="t" style="left:5.48px;top:587.00px;font-size:17px;color:#1d6b3f;transform:scaleX(0.9600);">15</div>
<div class="t" style="left:5.48px;top:611.00px;font-size:17px;color:#1d6b3f;transform:scaleX(0.9600);">16</div>
<div class="t" style="left:5.48px;top:635.00px;font-size:17px;color:#1d6b3f;transform:scaleX(0.9600);">17</div>
<div class="t" style="left:5.48px;top:659.00px;font-size:17px;color:#222;transform:scaleX(0.9600);">18</div>
<div class="t" style="left:61.71px;top:250.00px;font-size:18.4px;color:#ffffff;font-weight:700;transform:scaleX(0.9941);">ID</div>
<div class="t" style="left:161.02px;top:250.00px;font-size:18.4px;color:#d9d9d9;font-weight:700;transform:scaleX(0.9812);">Produto</div>
<div class="t" style="left:284.51px;top:250.00px;font-size:18.4px;color:#d9d9d9;font-weight:700;transform:scaleX(0.9872);">Qtde Vendida</div>
<div class="t" style="left:412.04px;top:250.00px;font-size:18.4px;color:#d9d9d9;font-weight:700;transform:scaleX(0.9647);">Qtde em Estoque</div>
<div class="t" style="left:61.73px;top:276.00px;font-size:16px;color:#000;transform:scaleX(1.0300);">10</div>
<div class="t" style="left:163.57px;top:276.00px;font-size:16px;color:#000;transform:scaleX(1.0300);">Caderno</div>
<div class="t" style="left:334.23px;top:276.00px;font-size:16px;color:#000;transform:scaleX(1.0300);">10</div>
<div class="t" style="left:480.87px;top:276.00px;font-size:16px;color:#000;transform:scaleX(1.0300);">1</div>
<div class="t" style="left:62.24px;top:300.00px;font-size:16px;color:#000;transform:scaleX(1.0300);">11</div>
<div class="t" style="left:162.54px;top:300.00px;font-size:16px;color:#000;transform:scaleX(1.0300);">Folha A4</div>
<div class="t" style="left:329.60px;top:300.00px;font-size:16px;color:#000;transform:scaleX(1.0300);">100</div>
<div class="t" style="left:471.60px;top:300.00px;font-size:16px;color:#000;transform:scaleX(1.0300);">140</div>
<div class="t" style="left:61.73px;top:324.00px;font-size:16px;color:#000;transform:scaleX(1.0300);">12</div>
<div class="t" style="left:161.00px;top:324.00px;font-size:16px;color:#000;transform:scaleX(1.0300);">Envelope</div>
<div class="t" style="left:323.04px;top:324.00px;font-size:16px;color:#000;transform:scaleX(0.9300);">#REF!</div>
<div class="t" style="left:480.87px;top:324.00px;font-size:16px;color:#000;transform:scaleX(1.0300);">5</div>
<div class="t" style="left:61.73px;top:348.00px;font-size:16px;color:#000;transform:scaleX(1.0300);">13</div>
<div class="t" style="left:175.41px;top:348.00px;font-size:16px;color:#000;transform:scaleX(1.0300);">Lápis</div>
<div class="t" style="left:334.23px;top:348.00px;font-size:16px;color:#000;transform:scaleX(1.0300);">10</div>
<div class="t" style="left:476.23px;top:348.00px;font-size:16px;color:#000;transform:scaleX(1.0300);">80</div>
<div class="t" style="left:61.22px;top:372.00px;font-size:16px;color:#000;transform:scaleX(1.0300);">14</div>
<div class="t" style="left:161.51px;top:372.00px;font-size:16px;color:#000;transform:scaleX(1.0300);">Lapiseira</div>
<div class="t" style="left:329.60px;top:372.00px;font-size:16px;color:#000;transform:scaleX(1.0300);">100</div>
<div class="t" style="left:476.23px;top:372.00px;font-size:16px;color:#000;transform:scaleX(1.0300);">70</div>
<div class="t" style="left:61.73px;top:396.00px;font-size:16px;color:#000;transform:scaleX(1.0300);">15</div>
<div class="t" style="left:151.72px;top:396.00px;font-size:16px;color:#000;transform:scaleX(1.0300);">Caneta azul</div>
<div class="t" style="left:329.60px;top:396.00px;font-size:16px;color:#000;transform:scaleX(1.0300);">200</div>
<div class="t" style="left:465.04px;top:396.00px;font-size:16px;color:#000;transform:scaleX(0.9300);">#REF!</div>
<div class="t" style="left:61.73px;top:420.00px;font-size:16px;color:#000;transform:scaleX(1.0300);">16</div>
<div class="t" style="left:132.16px;top:420.00px;font-size:16px;color:#000;transform:scaleX(1.0300);">Caneta vermelha</div>
<div class="t" style="left:329.60px;top:420.00px;font-size:16px;color:#000;transform:scaleX(1.0300);">500</div>
<div class="t" style="left:480.87px;top:420.00px;font-size:16px;color:#000;transform:scaleX(1.0300);">0</div>
<div class="t" style="left:61.73px;top:444.00px;font-size:16px;color:#000;transform:scaleX(1.0300);">17</div>
<div class="t" style="left:157.39px;top:444.00px;font-size:16px;color:#000;transform:scaleX(1.0300);">Canetinha</div>
<div class="t" style="left:334.75px;top:444.00px;font-size:16px;color:#000;transform:scaleX(1.0300);">45</div>
<div class="t" style="left:480.87px;top:444.00px;font-size:16px;color:#000;transform:scaleX(1.0300);">0</div>
<div class="t" style="left:61.73px;top:468.00px;font-size:16px;color:#000;transform:scaleX(1.0300);">18</div>
<div class="t" style="left:150.18px;top:468.00px;font-size:16px;color:#000;transform:scaleX(1.0300);">Lápis de cor</div>
<div class="t" style="left:334.23px;top:468.00px;font-size:16px;color:#000;transform:scaleX(1.0300);">51</div>
<div class="t" style="left:480.87px;top:468.00px;font-size:16px;color:#000;transform:scaleX(1.0300);">0</div>
<div class="t" style="left:61.73px;top:492.00px;font-size:16px;color:#000;transform:scaleX(1.0300);">19</div>
<div class="t" style="left:183.14px;top:492.00px;font-size:16px;color:#000;transform:scaleX(1.0300);">Giz</div>
<div class="t" style="left:323.04px;top:492.00px;font-size:16px;color:#000;transform:scaleX(0.9300);">#REF!</div>
<div class="t" style="left:480.87px;top:492.00px;font-size:16px;color:#000;transform:scaleX(1.0300);">0</div>
<div class="t" style="left:61.73px;top:516.00px;font-size:16px;color:#000;transform:scaleX(1.0300);">20</div>
<div class="t" style="left:152.24px;top:516.00px;font-size:16px;color:#000;transform:scaleX(1.0300);">Marca texto</div>
<div class="t" style="left:338.87px;top:516.00px;font-size:16px;color:#000;transform:scaleX(1.0300);">0</div>
<div class="t" style="left:480.87px;top:516.00px;font-size:16px;color:#000;transform:scaleX(1.0300);">1</div>
<div class="t" style="left:61.73px;top:540.00px;font-size:16px;color:#000;transform:scaleX(1.0300);">21</div>
<div class="t" style="left:118.25px;top:540.00px;font-size:16px;color:#000;transform:scaleX(1.0300);">Caderno de desenho</div>
<div class="t" style="left:334.23px;top:540.00px;font-size:16px;color:#000;transform:scaleX(1.0300);">10</div>
<div class="t" style="left:476.23px;top:540.00px;font-size:16px;color:#000;transform:scaleX(1.0300);">23</div>
<div class="t" style="left:61.73px;top:564.00px;font-size:16px;color:#000;transform:scaleX(1.0300);">22</div>
<div class="t" style="left:170.78px;top:564.00px;font-size:16px;color:#000;transform:scaleX(1.0300);">Régua</div>
<div class="t" style="left:334.23px;top:564.00px;font-size:16px;color:#000;transform:scaleX(1.0300);">56</div>
<div class="t" style="left:476.75px;top:564.00px;font-size:16px;color:#000;transform:scaleX(1.0300);">45</div>
<div class="t" style="left:61.73px;top:588.00px;font-size:16px;color:#000;transform:scaleX(1.0300);">23</div>
<div class="t" style="left:161.51px;top:588.00px;font-size:16px;color:#000;transform:scaleX(1.0300);">Borracha</div>
<div class="t" style="left:329.60px;top:588.00px;font-size:16px;color:#000;transform:scaleX(1.0300);">100</div>
<div class="t" style="left:465.04px;top:588.00px;font-size:16px;color:#000;transform:scaleX(0.9300);">#REF!</div>
<div class="t" style="left:61.22px;top:612.00px;font-size:16px;color:#000;transform:scaleX(1.0300);">24</div>
<div class="t" style="left:157.39px;top:612.00px;font-size:16px;color:#000;transform:scaleX(1.0300);">Apontador</div>
<div class="t" style="left:334.23px;top:612.00px;font-size:16px;color:#000;transform:scaleX(1.0300);">87</div>
<div class="t" style="left:476.23px;top:612.00px;font-size:16px;color:#000;transform:scaleX(1.0300);">78</div>
<div class="t" style="left:61.73px;top:636.00px;font-size:16px;color:#000;transform:scaleX(1.0300);">25</div>
<div class="t" style="left:116.19px;top:636.00px;font-size:16px;color:#000;transform:scaleX(1.0300);">Caderno de anotação</div>
<div class="t" style="left:323.04px;top:636.00px;font-size:16px;color:#000;transform:scaleX(0.9300);">#REF!</div>
<div class="t" style="left:471.60px;top:636.00px;font-size:16px;color:#000;transform:scaleX(1.0300);">100</div>
<div class="t" style="left:160.79px;top:61.00px;font-size:15.5px;color:#ec1c24;font-weight:700;transform:scaleX(1.2143);">2</div>
<div class="t" style="left:1776.11px;top:82.00px;font-size:15.5px;color:#ec1c24;font-weight:700;transform:scaleX(1.1857);">3</div>
<div class="t" style="left:1666.00px;top:157.00px;font-size:15.5px;color:#ec1c24;font-weight:700;transform:scaleX(0.9333);">4</div>
<div class="t" style="left:584.82px;top:419.00px;font-size:16.5px;color:#ec1c24;font-weight:700;transform:scaleX(0.9750);">1</div>
<!-- red annotation boxes -->
<div class="a" style="left:26px;top:243px;width:539px;height:413px;box-sizing:border-box;border:3px solid #ec1c24"></div>
<div class="a" style="left:70px;top:15px;width:117px;height:39px;box-sizing:border-box;border:3px solid #ec1c24"></div>
<div class="a" style="left:1681px;top:57px;width:91px;height:83px;box-sizing:border-box;border:3px solid #ec1c24"></div>
<div class="a" style="left:1680px;top:144px;width:124px;height:36px;box-sizing:border-box;border:3px solid #ec1c24"></div>
<div class="a" style="left:561px;top:652px;width:5px;height:5px;background:#217346"></div>
<div class="a" style="left:560px;top:651px;width:2px;height:2px;background:#fff;border-radius:1px"></div>
</body></html>
